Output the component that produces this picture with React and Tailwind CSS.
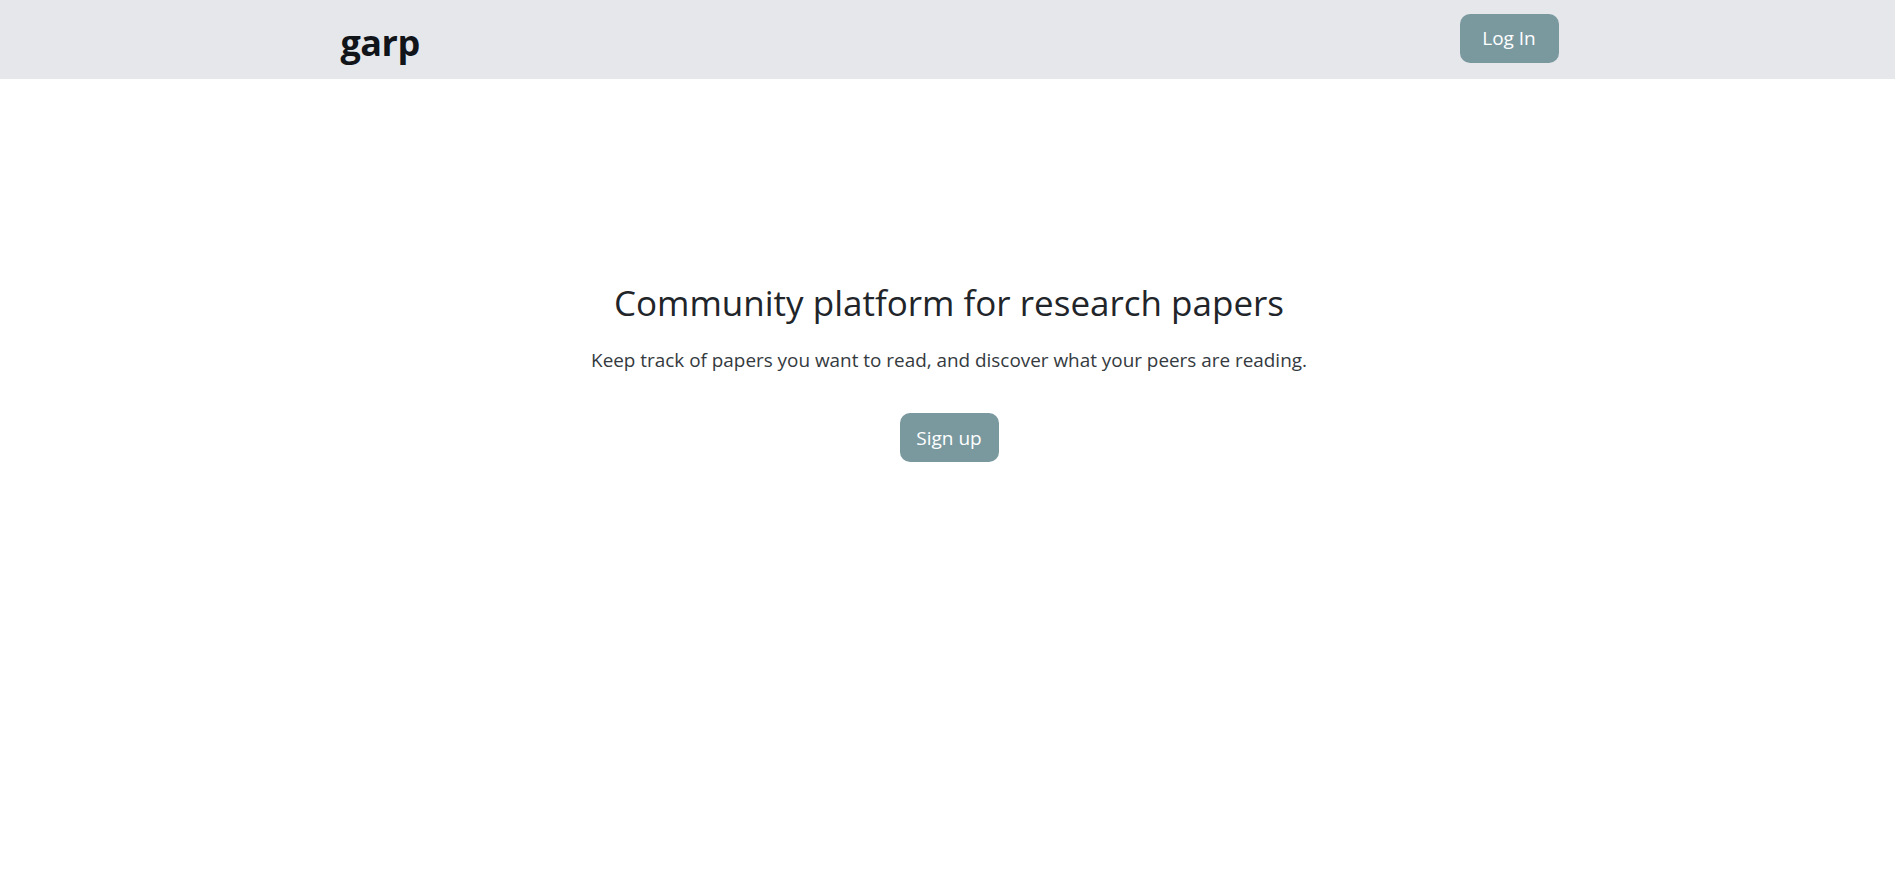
import React from 'react';

const font = { fontFamily: '"Open Sans", "Noto Sans", sans-serif' };

const Navbar = () => (
  <nav className="bg-[#e5e7eb] h-[79px]">
    <div className="w-[1222px] mx-auto h-full flex items-center justify-between">
      <a href="#" className="ml-[4px] text-[36px] font-bold text-[#111418] leading-none tracking-[-0.5px] pt-[6px]">
        garp
      </a>
      <button className="w-[99px] h-[49px] rounded-[10px] bg-[#7a999f] text-white text-[19px] mt-[-2px]">
        Log In
      </button>
    </div>
  </nav>
);

const App = () => {
  return (
    <div className="min-h-screen bg-white text-[#212529]" style={font}>
      <Navbar />
      {/* Hero */}
      <main className="flex flex-col items-center text-center pt-[203px] pl-[3px]">
        <h1 className="text-[35px] leading-[1.2] font-normal">Community platform for research papers</h1>
        <p className="mt-[22px] text-[18.9px] leading-[1.5] text-[#343a40]">
          Keep track of papers you want to read, and discover what your peers are reading.
        </p>
        <button className="mt-[39px] w-[99px] h-[49px] rounded-[10px] bg-[#7a999f] text-white text-[19px]">
          Sign up
        </button>
      </main>
    </div>
  );
};

export default App;
